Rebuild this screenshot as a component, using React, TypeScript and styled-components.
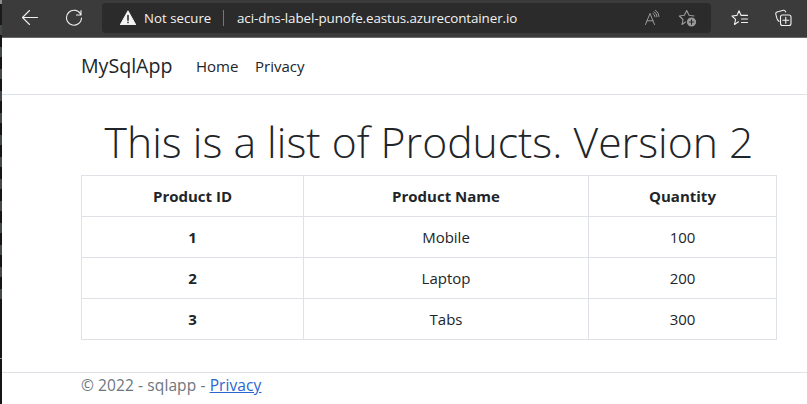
import React from 'react';
import styled, { createGlobalStyle } from 'styled-components';

const Global = createGlobalStyle`
  * { box-sizing: border-box; }
  body { margin: 0; background: #fff; color: #212529; font: 400 15px/24px "Open Sans", "Noto Sans", sans-serif; overflow: hidden; }
`;

const Desktop = styled.div`
  display: flex;
  height: 404px;
`;
const Backdrop = styled.div`
  width: 2px;
  flex: none;
  background:
    linear-gradient(#8d8c86 0 4px, #1b1b1b 4px 25px, transparent 25px 299px, #151515 299px 358px, #888 358px 359px, #151515 359px),
    repeating-linear-gradient(#151515 0 3px, #43484a 3px 13px, #151515 13px 22px);
`;
const Browser = styled.div`
  flex: 1;
  min-width: 0;
  background: #fff;
`;
const Toolbar = styled.div`
  display: flex;
  align-items: center;
  height: 38px;
  padding: 0 0 2px 19px;
  background: #3b3b3b;
  border-bottom: 1px solid #696969;
  color: #f2f2f2;
`;
const Icon = styled.svg<{ $gap?: number; $dim?: boolean }>`
  flex: none;
  margin-left: ${p => p.$gap ?? 0}px;
  fill: none;
  stroke: ${p => (p.$dim ? '#9b9b9b' : '#f0f0f0')};
  stroke-width: 1.1;
  stroke-linecap: round;
  stroke-linejoin: round;
`;
const AddressBar = styled.div`
  display: flex;
  align-items: center;
  width: 609px;
  height: 30px;
  margin-left: 19px;
  padding-left: 17px;
  border-radius: 4px;
  background: #2b2b2b;
`;
const Security = styled.span`
  width: 68px;
  margin-left: 7px;
  font-size: 13.2px;
  letter-spacing: 0.04px;
  white-space: nowrap;
`;
const Divider = styled.span`
  width: 1px;
  height: 16px;
  margin: 0 13px 0 11px;
  background: #777;
`;
const Address = styled.span`
  width: 407px;
  font-size: 13.4px;
  letter-spacing: -0.1px;
  white-space: nowrap;
`;
const Nav = styled.nav`
  display: flex;
  align-items: center;
  height: 57px;
  padding-left: 79px;
  border-bottom: 1px solid #dee2e6;
`;
const Brand = styled.span`
  width: 115px;
  font-size: 19.6px;
  white-space: nowrap;
`;
const NavLink = styled.span`
  width: 59px;
  white-space: nowrap;
`;
const Main = styled.main`
  width: 696px;
  margin-left: 79px;
  padding-top: 16px;
`;
const Title = styled.h1`
  margin: 0;
  height: 64px;
  font-size: 42.7px;
  font-weight: 300;
  line-height: 62px;
  text-align: center;
  white-space: nowrap;
`;
const Table = styled.table`
  width: 696px;
  table-layout: fixed;
  border-collapse: collapse;
  text-align: center;
`;
const Column = styled.col<{ $width: number }>`
  width: ${p => p.$width}px;
`;
const Cell = styled.td`
  height: 41px;
  padding: 0;
  border: 1px solid #dee2e6;
`;
const HeadCell = styled(Cell)`
  font-weight: 700;
`;
const Footer = styled.footer`
  margin-top: 32px;
  padding: 0 0 0 79px;
  height: 32px;
  border-top: 1px solid #dee2e6;
  color: #6c757d;
  font-size: 15.5px;
  letter-spacing: 0.1px;
`;
const Link = styled.a`
  color: #2a66d0;
  text-decoration: underline;
`;

const products = [
  [1, 'Mobile', 100],
  [2, 'Laptop', 200],
  [3, 'Tabs', 300],
];

export default function App() {
  return (
    <Desktop>
      <Global />
      <Backdrop />
      <Browser>
        <Toolbar>
          <Icon width="18" height="18" viewBox="0 0 18 18"><path d="M16.5 8.5H1.5M8.5 1.5 1.5 8.5l7 7" /></Icon>
          <Icon $gap={26} width="18" height="18" viewBox="0 0 18 18"><path d="M16 6a7.5 7.5 0 1 0 .5 3M16 1.5V6h-4.5" /></Icon>
          <AddressBar>
            <Icon width="18" height="18" viewBox="0 0 18 18">
              <path d="M9 2 1.5 15.5h15Z" fill="#f5f5f5" />
              <path d="M9 6.5v4.7M9 13.4v.2" stroke="#2b2b2b" strokeWidth="1.6" />
            </Icon>
            <Security>Not secure</Security>
            <Divider />
            <Address>aci-dns-label-punofe.eastus.azurecontainer.io</Address>
            <Icon $dim width="18" height="18" viewBox="0 0 18 18"><path d="M1.5 15.5 6 4.5l4.5 11M3 11.8h6M9 4.5q2 1 2 3.2M10 2.8q3 1.2 3 5M11.5 1.3q3.5 1.8 3.5 6.2" strokeWidth="1" /></Icon>
            <Icon $dim $gap={16} width="19" height="18" viewBox="0 0 19 18">
              <path d="M7.5 13 4 15.5 5 10.5 1.3 7l5-.7L8.7 1.5 11 6.3l5 .7" />
              <circle cx="13.5" cy="13" r="4" fill="#9b9b9b" />
              <path d="M13.5 10.8v4.4M11.3 13h4.4" stroke="#2b2b2b" />
            </Icon>
          </AddressBar>
          <Icon $gap={20} width="18" height="18" viewBox="0 0 18 18"><path d="M7.5 12.8 3.5 15.5 4.6 10.4 1 7l5-.6L8 1.8l2.1 4.6H16.5M10.5 10H16.5M10.5 13.5H16.5" /></Icon>
          <Icon $gap={26} width="18" height="18" viewBox="0 0 18 18"><path d="M4 12.5Q2 11 1.5 8L.8 5Q.5 3.5 2 3l6.5-1.7Q10 1 10.7 3" /><rect x="5.5" y="6" width="10.5" height="10.5" rx="2" /><path d="M10.75 8.3v6M7.8 11.25h6" /></Icon>
        </Toolbar>
        <Nav>
          <Brand>MySqlApp</Brand>
          <NavLink>Home</NavLink>
          <NavLink>Privacy</NavLink>
        </Nav>
        <Main>
          <Title>This is a list of Products. Version 2</Title>
          <Table>
            <colgroup><Column $width={222} /><Column $width={285} /><Column $width={188} /></colgroup>
            <thead><tr><HeadCell as="th">Product ID</HeadCell><HeadCell as="th">Product Name</HeadCell><HeadCell as="th">Quantity</HeadCell></tr></thead>
            <tbody>
              {products.map(([id, name, quantity]) => (
                <tr key={id}><HeadCell as="th">{id}</HeadCell><Cell>{name}</Cell><Cell>{quantity}</Cell></tr>
              ))}
            </tbody>
          </Table>
        </Main>
        <Footer>© 2022 - sqlapp - <Link>Privacy</Link></Footer>
      </Browser>
    </Desktop>
  );
}
